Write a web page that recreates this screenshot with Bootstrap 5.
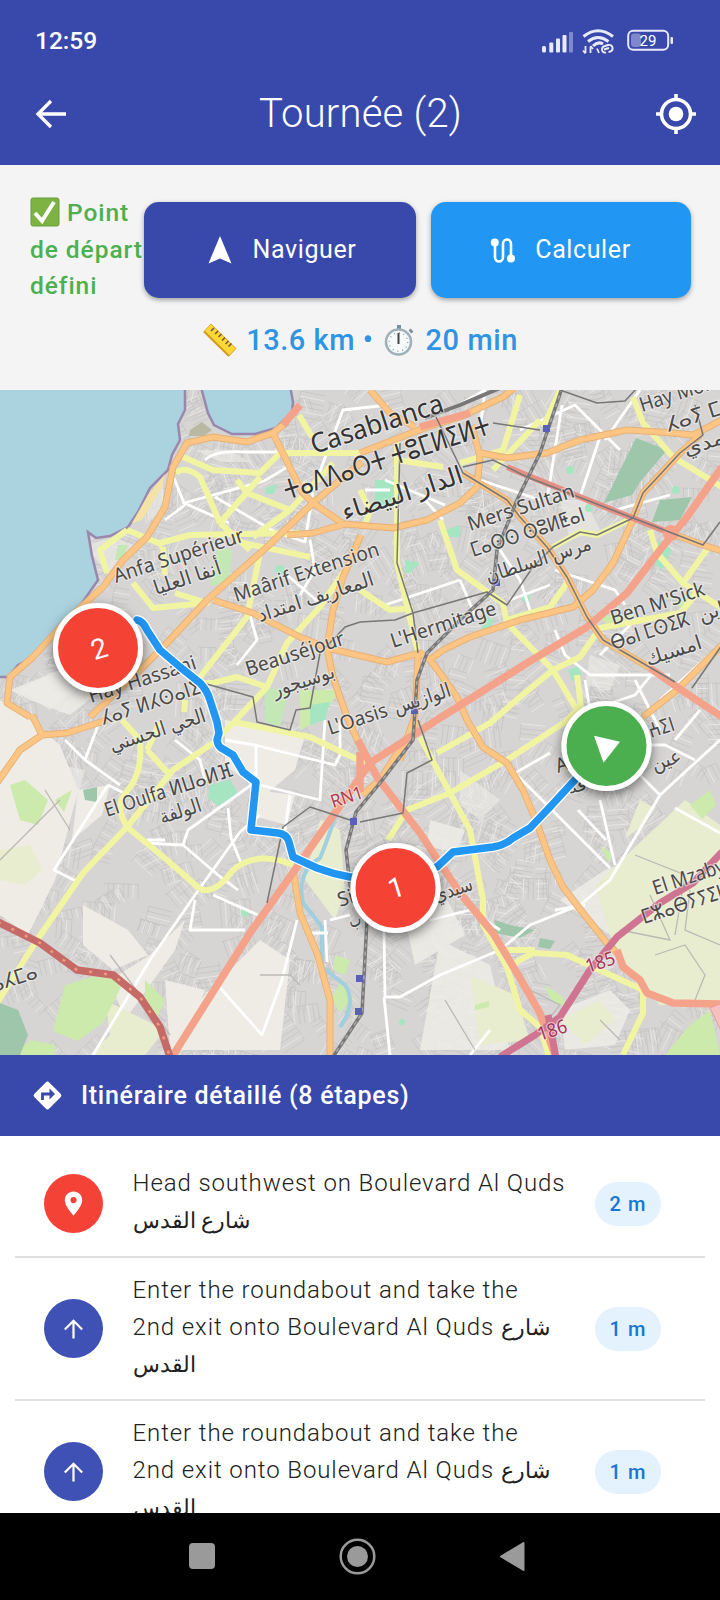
<!DOCTYPE html>
<html lang="fr">
<head>
<meta charset="utf-8">
<meta name="viewport" content="width=device-width, initial-scale=1">
<title>Tournée</title>
<link href="https://cdn.jsdelivr.net/npm/bootstrap@5.3.0/dist/css/bootstrap.min.css" rel="stylesheet">
<style>
body{font-family:Roboto,"Noto Sans","DejaVu Sans",sans-serif;width:720px;height:1600px;overflow:hidden;background:#fff}
svg{display:block;flex:none}
.indigo{background:#3949ab}
.statusbar{height:82px;padding:0 47px 0 35px}
.clock{font-size:24.5px;font-weight:500;letter-spacing:0;line-height:1}
.titlebar{height:83px;padding:0 23px 20px 34px}
.titlebar h1{font-size:40px;font-weight:300;letter-spacing:.2px;line-height:62px;position:relative;left:-1px}
.summary{height:225px;background:#f4f4f4;padding:30px 29px 0 30px}
.start-ok{width:114px;color:#4caf50;font-size:24.5px;font-weight:500;line-height:36.7px;letter-spacing:.95px;white-space:nowrap}
.start-ok svg,.trip svg{display:inline-block}
.btn-app{height:96px;border:0;border-radius:15px;color:#fff;font-size:25px;letter-spacing:.6px;box-shadow:0 2px 5px rgba(0,0,0,.35);padding:0}
.trip{color:#2e94e3;font-size:29px;font-weight:500;line-height:40px;letter-spacing:.55px;margin-top:15px}
.map{height:665px;background:#d6d5d4;overflow:hidden}
.map text{font-family:"Noto Sans","DejaVu Sans",sans-serif;fill:#4a4a4a;font-size:20px;paint-order:stroke;stroke:#f4f2ef;stroke-opacity:.6;stroke-width:2.5px;stroke-linejoin:round}
.map .pin-no{font-family:Roboto,sans-serif;font-size:28px;fill:#fff;stroke:none;text-anchor:middle}
.steps-head{height:81px;padding:0 0 0 32px;font-size:25px;font-weight:500;letter-spacing:.72px}
.steps{height:377px;overflow:hidden;padding:15.500px 15px 0}
.step{height:143px;padding:0 44px 0 29px;border-bottom:2px solid #e0e0e0}
.step:first-child{height:106.500px}
.dot{width:59px;height:59px;flex:none}
.step p{width:440px;margin:-3px 0 0 29.5px;font-size:24px;font-weight:300;line-height:37px;letter-spacing:.9px;color:#212121}
.arab{font-size:21.5px;line-height:1;letter-spacing:0}
.dist{width:66px;height:44px;background:#e3f2fd;color:#1976d2;font-size:20px;font-weight:500;letter-spacing:1px;margin-left:auto}
.navkeys{height:87px;background:#000}
</style>
</head>
<body class="d-flex flex-column">
<div class="indigo statusbar d-flex align-items-center justify-content-between text-white flex-shrink-0">
  <span class="clock">12:59</span>
  <svg width="131" height="28" viewBox="0 0 131 28">
    <g fill="#e8eafc"><rect x="0" y="19" width="4" height="6.500" rx="1.500"/><rect x="7.300" y="15.500" width="4" height="10" rx="1"/><rect x="14" y="11.500" width="4" height="14" rx="1"/><rect x="20.500" y="8" width="4" height="17.500" rx="1"/><rect x="27" y="5" width="4" height="20.500" rx="1" opacity=".4"/></g>
    <g fill="none" stroke="#e8eafc" stroke-width="3"><path d="M41.500 9.500Q56-2 71 9.500M46 14.500Q56 6.500 66.500 14.500M51 19Q56 14 61 17"/><path d="M43.500 19v7m-2.500-2.500 2.500 3M48.500 26v-6.500m2.500 2.500-2.500-3M55 21.500l2 4.500" stroke-width="1.800"/><path d="M64 25.500c-4 1-6-5-1-6.500l3-1c5-1 6 5 2.500 6.500l-2 .5M62 22.500l5-1.500" stroke-width="1.900"/></g>
    <rect x="86.200" y="3.700" width="40" height="19" rx="5" fill="none" stroke="#e8eafc" stroke-width="2"/><rect x="89" y="6.500" width="10" height="13.500" rx="3" fill="#7f88cb"/><rect x="128.500" y="10" width="2.500" height="7" rx="1" fill="#e8eafc"/>
    <text x="106" y="18.500" text-anchor="middle" fill="#fff" font-size="15" font-family="Roboto">29</text>
  </svg>
</div>
<header class="indigo titlebar d-flex align-items-center justify-content-between text-white flex-shrink-0">
  <svg width="34" height="30" viewBox="0 0 34 30" fill="none" stroke="#fff" stroke-width="3.300"><path d="M32 15H5M17 2 4 15l13 13"/></svg>
  <h1 class="m-0">Tournée (2)</h1>
  <svg width="42" height="42" viewBox="0 0 42 42"><circle cx="21" cy="21" r="14.500" fill="none" stroke="#fff" stroke-width="3.600"/><circle cx="21" cy="21" r="7.300" fill="#fff"/><path d="M21 1v6M21 35v6M1 21h6M35 21h6" stroke="#fff" stroke-width="3.600"/></svg>
</header>
<section class="summary flex-shrink-0">
  <div class="d-flex align-items-center">
    <div class="start-ok flex-shrink-0"><svg width="30" height="30" viewBox="0 0 30 30" style="vertical-align:-6px"><rect x="1" y="1" width="28" height="28" rx="2" fill="#7cb342" stroke="#689f38"/><path d="m5 16 7 8L24 5" fill="none" stroke="#fff" stroke-width="4"/></svg> Point<br>de départ<br>défini</div>
    <button class="btn btn-app indigo d-flex align-items-center justify-content-center" style="width:272px"><svg width="24" height="30" viewBox="0 0 24 30" fill="#fff" class="ms-1"><path d="M12 1 23.500 28.500 12 23.500.500 28.500z"/></svg><span style="margin-left:21px">Naviguer</span></button>
    <button class="btn btn-app d-flex align-items-center justify-content-center" style="width:260px;margin-left:14.500px;background:#2196f3"><svg width="26" height="27" viewBox="0 0 26 27"><path d="M5 5v15c0 6 8 6 8 0V7c0-6 8-6 8 0v14" fill="none" stroke="#fff" stroke-width="2.600"/><circle cx="4.800" cy="5.500" r="4" fill="#fff"/><circle cx="21" cy="21.500" r="4" fill="#fff"/></svg><span style="margin-left:19px">Calculer</span></button>
  </div>
  <div class="trip d-flex align-items-center justify-content-center">
    <svg width="34" height="34" viewBox="0 0 34 34"><path d="M8 1 33 25.500 26 33 1 8.500z" fill="#fdd835" stroke="#e0a91f"/><path d="m1 8.500 25 24.500" stroke="#d29a20" stroke-width="2"/><path d="m11 5-3 3m7 0-3 3m6.500 0-3 3m6.500.500-3 3m6.500.500-3 3m6-.500-3 3" stroke="#795548" stroke-width="1.600"/></svg>
    <span style="margin:0 10px 0 9px">13.6 km •</span>
    <svg width="30" height="34" viewBox="0 0 30 34"><path d="M15 6V2M26 9l2-2" stroke="#78909c" stroke-width="4"/><circle cx="14.500" cy="19" r="12.500" fill="#f7fafb" stroke="#9fb0b8" stroke-width="2.600"/><circle cx="14.500" cy="19" r="9.200" fill="none" stroke="#90a4ae" stroke-width="1.500" stroke-dasharray="1 3.820"/><path d="M14.500 21V10" stroke="#444" stroke-width="2"/></svg>
    <span style="margin-left:12px">20 min</span>
  </div>
</section>
<section class="map flex-shrink-0">
<svg width="720" height="665" viewBox="0 390 720 665">
  <defs><filter id="shade" x="-40%" y="-40%" width="180%" height="180%"><feDropShadow dx="0" dy="4" stdDeviation="6" flood-opacity=".5"/></filter></defs>
  <path id="blocks" fill="none" stroke="#c3c1c1" stroke-width=".7"/>
  <path id="lanes" fill="none" stroke="#e9e7e6" stroke-width="1"/>
  <!-- open land -->
  <g fill="#efece6">
    <path d="M0 700 30 720 60 745 78 790 55 880 28 935 0 915zM78 790l32-5-8 30-30 25zM83 905l45 25 20 25-35 15-30-25zM150 955l35-35-10 30-50 70-15-40zM165 980l40 10-25 60h-10zM200 1000l60-60 30 20-10 90h-100zM225 720l80 15-10 35-30 25-40-30zM255 790l40 5-8 30-30-8z"/>
    <path d="M430 820l35 10-8 22-30-5zM440 940l50 25 20 85H420zM560 1010l50-20 20 20-15 35-50 5zM560 900l45-30 30-10-10 60-15 15zM10 690l50-20 35 25-25 20-40-15zM390 850l30-5 30 60 15 30-50 30z" opacity=".85"/>
    <path d="M85 545l30-8 20 10-25 30zM145 500l18-15 0 25-15 12zM195 450l35 0 20 12-30 0zM560 500l25 0 15 30-30 10zM20 690l30-15 25 15-25 20zM40 760l45 10-10 35-30 0zM590 655l30 10-10 25-25-5zM460 770l40 30-20 20-20-15z" opacity=".6"/>
  </g>
  <g fill="#e9edcf">
    <path d="M0 850 30 845 42 870 25 885 0 880zM105 1000l60 30-20 25H90l20-20zM595 885l90-85 35 25v180h-60l-45-55zM640 800l15 8-12 18-18 12zM305 880l15-60 20 10 5 60-10 30zM470 975l45 20 15 45-50 5zM560 1020l40-20 15 20-30 25z"/>
  </g>
  <g fill="#cbeaac"><path d="M10 785 25 780 48 800 38 825 20 820zM55 800l17-10-8 22zM65 985l40-12 18 10-20 40-25 18-25-10zM145 980l20 20-8 18-12-15zM30 1040l25 5v10H15zM335 955l15 5-5 15-12-5zM690 1025l20-15 10 45h-55zM331 998l12-20 10 20-13 15zM690 805l20-15 6 15-14 14zM545 985l18 12 2 10-15-8zM475 1005l14-4v6l-14 3zM600 846l14 8-6 8zM340 690l-40 0 0 40 20-10zM595 615l40 0-20 15zM670 605l25-15-5 18z"/><path d="M218 548l15 2-5 35-18 0zM265 690l25-3-10 40-15-5zM118 545l10 0-5 15-8 0z" fill="#c4e8b5"/></g>
  <g fill="#a6e5c2"><path d="M210 785l20-6 8 15-20 12-10-8zM375 480l22 0-3 25-20 5zM310 705l20-3-5 18-15 5zM405 560l15 3-10 10-5 0zM484 615l10 5-5 12-8-2zM650 560l10-20 12 10-10 20zM568 670l10-4 4 10-10 5zM445 530l15-5 0 12-10 0zM265 488l12-4-3 10-8 0z"/><circle cx="245" cy="913" r="4"/><circle cx="402" cy="1022" r="3"/><circle cx="526" cy="598" r="4"/><circle cx="589" cy="508" r="4"/><circle cx="676" cy="490" r="4"/><circle cx="570" cy="470" r="4"/><circle cx="280" cy="570" r="5"/></g>
  <g fill="#9dc6aa"><path d="M636 438 667 450 640 482 632 495 604 503 620 470zM660 500 692 497 680 520 652 522zM0 1003 18 1010 28 1035 20 1055H0zM495 920l15 5 25 5-15 8-25-5zM540 938l15 3-5 8-12-2zM83 790l14-3 0 15-12-2z"/></g>
  <!-- sea -->
  <g fill="#aad3df" stroke="#9a87ae" stroke-width="2.500">
    <path d="M185 380 185 410 178 424 180 440 172 455 168 470 150 488 138 512 128 527 110 536 96 538 88 532 92 556 98 580 82 603 57 632 35 657 18 665 8 677-5 677V380z"/>
    <path d="M199 380 208 413 214 425 232 434 255 434 276 428 292 412 293 402 289 380z"/>
  </g>
  <path d="M165 474 148 495 132 523 142 520 162 487z" fill="#f5e2a6"/><path d="m190 430 12-8 10 8-8 6h-15z" fill="#b9b8a3"/>
  <path d="M343 790Q330 835 320 858Q296 872 303 903L322 927V967L345 985Q357 1003 340 1027" fill="none" stroke="#a0d0df" stroke-width="4"/>
  <!-- minor roads -->
  <g fill="none" stroke="#fff" stroke-width="2.800" stroke-linejoin="round">
    <path d="M93 1055 150 960 195 895 240 832 260 815M108 785 54 870 76 881M108 785l30 15M65 740l20 20 35 25M85 760l15-40M165 840h-18M143 843l40 2 35 30 20 15M183 845l5-15 45-32 25-18M228 808l3 30 10 25M175 740l25 20 5 20M195 900l-5 30h55M213 895l45 20M297 920l-15 60-20 55-40-45-3-4M225 740l30 5 80 20 5-10V720M256 745v35M260 785l60 15 5-80M290 795l-5 35M325 920l2 42M308 933h20M330 920l20-5M174 478l10 25 45 20M184 503l80-22 25-15M205 460q10-10 40-8h60M215 497l60 35 30 10 8-50M165 520l20-15M313 490l30-80 45-5M250 615l7 25-20 25M287 575l35 30M310 540l5 30-15 25"/>
    <path d="M385 605 460 580M460 580 475 615M500 550 520 580 530 610M510 600l40-15M555 570l60 20 10 15M555 630l10 25 25 20 80 0M520 430 575 405 620 450M600 437 580 497M640 390l-35 50M562 405l-15 95M385 480l60 25M443 520 425 500M480 480l60 20M615 510l55-15M585 680l5 30 45-15 20-25M635 680l25 50M660 700l60-55M600 655l30-30M365 490H390M450 410l35-20-5 40M600 800l15 65M515 773l95 95M515 773l35-20M578 810l28 30M720 740 660 795 610 880 580 905 530 925 500 950 440 975 400 997 385 997 384 930M384 997 390 1055M430 920l40-10 30 20M675 808l45 25M660 795l-20-20M610 745l55 0 30 15M675 740l25-30M470 1055l20-25M585 905l-30 5"/>
  </g>
  <g fill="none" stroke="#bbb9b4" stroke-width="1.300"><path d="M0 860 60 800M620 930l50 10-20-45M690 890l-5 40 35 15M655 955l30-10 20 30-10 25M635 855l50 20-10 60M530 990l30 15-20 25M445 1000l30 50M600 1020l20 20M70 830l-25-40M110 955l60 80M260 975l30 0 10 10"/></g>
  <!-- yellow roads -->
  <g fill="none" stroke="#f1f5a2" stroke-width="6" stroke-linejoin="round">
    <path d="M-3 1003 37 940 83 873 127 827 167 860 200 889Q215 895 233 870Q257 850 293 865M127 827Q113 805 128 790Q143 772 140 740L122 720M127 827 173 770 213 743 234 722 267 687 287 643 320 607 345 570M234 722 310 737 365 763M147 750 168 773M147 750 160 722M185 700 184 712"/>
    <path d="M200 683 213 683 237 677 267 687M200 677 247 617 260 553M220 523 200 477Q185 465 176 473M183 457 213 470 260 473 280 453 360 453M220 523 260 477M237 480 247 493 290 510 253 537M290 510 333 463M160 543 190 535 300 533M127 530 100 550 107 573M127 530 163 545M243 543 310 557M133 583 153 608 207 603 175 593M220 523 250 550M163 547 165 575M299 415 312 437"/>
    <path d="M397 440 397 563 418 653M360 590 390 610 413 608M440 520 457 570 503 603 507 623 553 670 580 657 600 628 680 613 700 590M553 670 520 697 490 723 437 753M553 670 577 710 565 722 507 760 450 793 407 810 388 840M577 675 582 715M397 460 443 467M460 463 503 450 520 395M540 420 493 470M560 390 543 427M633 397 643 423 673 457 722 487M650 530 657 553 683 583 710 545M683 583 722 608M507 620 550 607 567 583M553 547 580 532 597 535 633 518M360 490 370 510 365 525"/>
    <path d="M420 737 450 793 470 830 483 900 483 925 507 967 520 1010 540 1027 550 1060M507 967 533 953 567 955 643 990 643 1013 623 1055M505 950H535"/>
  </g>
  <!-- orange roads -->
  <g fill="none" stroke-linejoin="round">
    <path id="casing" stroke="#e6b078" stroke-width="7"/>
    <path id="fill" stroke="#fcc584" stroke-width="5.200"/>
  </g>
  <!-- trunk roads and motorways -->
  <g fill="none" stroke-linejoin="round">
    <path d="M722 467 687 517 660 550 627 593 587 627 527 663 440 718 370 763 337 810 297 867 250 933 172 1057M358 740 377 777 420 833 460 893 493 933 517 973 540 1013 556 1058M617 950 623 967 640 980 647 993 673 1003 722 1004M650 668 677 687 722 717M300 405 283 425M420 427 470 413M360 752v40" stroke="#f5a28b" stroke-width="7.500"/>
    <path d="M507 467 580 497 670 533" stroke="#e58f83" stroke-width="6"/><circle cx="671" cy="533" r="8" fill="#f5a28b"/>
    <path d="M-2 922 40 943 77 970 113 975 140 997 160 1027 170 1057" stroke="#c66a67" stroke-width="7.500"/><path d="M-2 922 40 943 77 970 113 975 140 997 160 1027 170 1057" stroke="#ef9a7d" stroke-width="2.500" stroke-dasharray="3 12"/>
    <path d="M500 1057 535 1035 560 1017 590 970 617 937 660 903 693 883 722 852M548 1015 556 1058" stroke="#cf7592" stroke-width="7"/>
    <path d="m710 1008 12-5v30z" fill="#f5c0bd" stroke="#e79ca0"/>
  </g>
  <!-- rail and tram -->
  <g fill="none" stroke="#777" stroke-linejoin="round">
    <path d="M562 388 540 453 517 500 497 550 493 590 460 620 427 653 417 680 415 710 413 740 380 783 356 812 346 850 350 885 367 920 362 1013 333 1057" stroke-width="3.500"/><path d="M562 388 540 453 517 500 497 550 493 590 460 620 427 653 417 680 415 710 413 740 380 783 356 812 346 850 350 885 367 920 362 1013 333 1057" stroke="#aaa" stroke-width="1.500" stroke-dasharray="4 4"/>
    <path d="M425 418 460 405 500 388" stroke-width="4"/>
    <path d="M360 622 395 620 413 613 487 592 507 605 533 567 553 547 580 532 597 535 633 518M400 443 397 563 413 613 418 653M560 390 597 403 625 401 637 388M493 423 540 430M436 417 463 473 507 500 520 517 547 547 567 577 587 617 603 640 675 682M463 467 493 460 527 477 633 518 703 545 720 522M633 518 643 493 680 453 703 435 695 405M692 688 722 645M203 683 253 697 257 722 290 730 296 710 310 708 320 653 345 627 360 622M267 903 283 827 310 807 350 820M418 720 432 760 407 773 403 813 360 822" stroke-width="1.500"/>
  </g>
  <g fill="#5960b5"><path d="M543 425h7v7h-7zM493 579h7v7h-7zM411 707h7v7h-7zM350 818h7v7h-7zM356 975h7v7h-7zM355 1008h7v7h-7z"/></g>
  <g id="labels"></g>
  <!-- driving route -->
  <g fill="none" stroke-linejoin="round" stroke-linecap="round">
    <path id="halo" stroke="#fff" stroke-width="10"/>
    <path id="line" stroke="#2196f3" stroke-width="7.500"/>
  </g>
  <g stroke="#fff" stroke-width="5"><circle cx="98" cy="648" r="42.500" fill="#f44336" filter="url(#shade)"/><circle cx="395.500" cy="888" r="42.500" fill="#f44336" filter="url(#shade)"/><circle cx="606.500" cy="746" r="42.500" fill="#4caf50" filter="url(#shade)"/></g>
  <text class="pin-no" transform="translate(102 658) rotate(-17)">2</text>
  <text class="pin-no" transform="translate(399 897) rotate(-17)">1</text>
  <path d="M594 735.700 620 741.700 603.500 762.700z" fill="#fff"/>
</svg>
</section>
<div class="indigo steps-head d-flex align-items-center text-white flex-shrink-0">
  <svg width="31" height="31" viewBox="0 0 31 31"><rect x="5" y="5" width="21" height="21" rx="2.500" transform="rotate(45 15.500 15.500)" fill="#fff"/><path d="M10.500 20v-6h8" fill="none" stroke="#3949ab" stroke-width="2.800"/><path d="m17.500 8.500 5.500 5.500-5.500 5.500z" fill="#3949ab"/></svg>
  <span style="margin-left:18px">Itinéraire détaillé (8 étapes)</span>
</div>
<main class="steps flex-shrink-0">
  <div class="step d-flex align-items-center">
    <svg class="dot" viewBox="0 0 59 59"><circle cx="29.500" cy="29.500" r="29.500" fill="#f44336"/><path fill-rule="evenodd" d="M29.500 17.500c-5 0-8.700 3.800-8.700 8.700 0 6.300 8.700 15.300 8.700 15.300s8.700-9 8.700-15.300c0-4.900-3.700-8.700-8.700-8.700zm0 11.700a3.100 3.100 0 1 1 0-6.200 3.100 3.100 0 0 1 0 6.200z" fill="#fff"/></svg>
    <p>Head southwest on Boulevard Al Quds<br><span class="arab">شارع القدس</span></p><span class="dist rounded-pill d-flex align-items-center justify-content-center">2 m</span>
  </div>
  <div class="step d-flex align-items-center">
    <svg class="dot" viewBox="0 0 59 59"><circle cx="29.500" cy="29.500" r="29.500" fill="#3f51b5"/><path d="M29.500 39.500V22M20.800 30.500l8.700-8.700 8.700 8.700" fill="none" stroke="#fff" stroke-width="2.200"/></svg>
    <p>Enter the roundabout and take the<br>2nd exit onto Boulevard Al Quds <span class="arab">شارع</span><br><span class="arab">القدس</span></p><span class="dist rounded-pill d-flex align-items-center justify-content-center">1 m</span>
  </div>
  <div class="step d-flex align-items-center">
    <svg class="dot" viewBox="0 0 59 59"><circle cx="29.500" cy="29.500" r="29.500" fill="#3f51b5"/><path d="M29.500 39.500V22M20.800 30.500l8.700-8.700 8.700 8.700" fill="none" stroke="#fff" stroke-width="2.200"/></svg>
    <p>Enter the roundabout and take the<br>2nd exit onto Boulevard Al Quds <span class="arab">شارع</span><br><span class="arab">القدس</span></p><span class="dist rounded-pill d-flex align-items-center justify-content-center">1 m</span>
  </div>
</main>
<footer class="navkeys flex-shrink-0">
  <svg width="720" height="87" viewBox="0 1 720 87"><rect x="189" y="31" width="26" height="26" rx="4" fill="#9a9a9a"/><circle cx="357.500" cy="44.500" r="16.800" fill="none" stroke="#9a9a9a" stroke-width="2.500"/><circle cx="357.500" cy="44.500" r="10.500" fill="#9a9a9a"/><path d="M523.500 31v27L501 44.500z" fill="#9a9a9a" stroke="#9a9a9a" stroke-width="2" stroke-linejoin="round"/></svg>
</footer>
<script src="https://cdn.jsdelivr.net/npm/bootstrap@5.3.0/dist/js/bootstrap.bundle.min.js"></script>
<script>
const put = (id, d) => document.getElementById(id).setAttribute("d", d);
const orange = "M287 422 273 433 247 442 213 437 187 443 173 467 165 507 147 537 123 560 103 587 67 620 33 657 10 677 7 703 30 717M107 720 67 733 42 735 20 750-3 783M42 735 32 715M362 462 313 503 267 547 233 577 207 600 167 643 143 667 90 717M313 503 345 525M273 433 302 492 315 505M360 453 427 427 460 417 503 397 515 387M287 535 313 533 345 524 393 528 427 520 460 503 477 487 480 457 472 425M480 453 507 458 547 453 580 440 627 430 660 432 693 435 722 420M370 390 390 413 415 427M633 520 613 563 593 590 573 607 520 620 470 637 443 650 430 660 420 653 387 662 327 648 300 637 253 613 213 600M327 648 333 610 343 577 361 535M327 648 333 677 347 717 362 750M430 660 440 673 457 697 467 720 483 747 507 763 523 790 537 823 550 860 563 887 583 913 607 943 617 953M463 473 507 500 520 517 547 547 567 577 587 617 603 640 650 668M633 518 643 493 680 453 700 435M643 717 677 690 722 645M670 533 703 545 722 551M293 870 300 913 317 953 330 1000 330 1057M418 655 415 715 400 760M418 720 380 780 362 795";
put("casing", orange); put("fill", orange);
const route = "M137 620Q143 621 147 630L160 650 180 667 200 683Q207 690 210 700L217 722 219 733 217 740Q218 747 223 749L233 755 243 772 256 782 251 830 278 833Q287 834 289 842L293 857 317 868Q333 874 350 877H395L437 867 453 852 493 847Q505 845 513 838L530 828 550 807 573 782 606 746";
put("halo", route); put("line", route);
// Place names: text, start x, baseline y, length along the baseline, size, colour
const names = [
 ["Casablanca",314,454,138,27,"#333"],["ⵜⴰⴷⴷⴰⵔⵜ ⵜⵓⵎⵍⵉⵍⵜ",287,500,216,27,"#333"],["الدار البيضاء",345,521,126,25,"#333"],
 ["Anfa Supérieur",116,583,136],["أنفا العليا",156,595,70],["Maârif Extension",236,602,152],["المعاريف امتداد",260,622,121],
 ["Beauséjour",248,676,103],["بوسيجور",275,697,64],["Mers Sultan",470,531,111],["ⵎⴰⵙⵙ ⵙⵓⵍⵟⴰⵏ",473,557,119],
 ["مرس السلطان",488,583,110],["L'Hermitage",393,648,110],["Ben M'Sick",613,625,98],["ⴱⴰⵏ ⵎⵙⵉⴽ",613,650,82],["ابن",701,622,26],
 ["امسيك",648,666,58],["Hay Mohammadi",642,412,150],["ⵃⴰⵢ ⵎⵓⵃⵎⵎⴰⴷⵉ",668,432,150],["مدي",686,456,42],
 ["L'Oasis",330,735,62],["الوازيس",396,714,59],["Hay Hassani",91,703,112],["ⵃⴰⵢ ⵍⵃⵙⴰⵏⵉ",103,725,104],["الحي الحسني",112,752,100],
 ["El Oulfa ⵍⵡⴰⵍⴼ",107,817,134],["الولفة",162,824,43],["El Mzaby",655,895,75],["ⵎⵣⴰⴱⵢⵢⵉⵏ",644,924,84],["ⴰⵃⵎⴰ",-6,992,47],
 ["Si",340,907,16],["ب",351,928,12],["سيدي",436,902,40],["A",558,773,12],["ⵄⵉⵏ",651,738,26],["عين",654,771,30],["قة",569,795,20],
 ["RN1",333,808,33,18,"#b53a4a"],["185",588,973,30,19,"#a53654"],["186",540,1041,30,19,"#a53654"]];
const ns = "http://www.w3.org/2000/svg", box = document.getElementById("labels");
names.forEach(([t,x,y,w,s=20,c="#4a4a4a"]) => {
  const e = document.createElementNS(ns,"text");
  e.setAttribute("transform",`translate(${x} ${y}) rotate(-18)`);
  e.setAttribute("textLength",w); e.setAttribute("lengthAdjust","spacingAndGlyphs");
  e.style.fontSize = s+"px"; e.style.fill = c; e.textContent = t; box.append(e);
});
// Fine street mesh: small blocks, each with its own orientation
let seed = 7; const rnd = () => (seed = (seed*16807)%2147483647)/2147483647;
let a = "", b = "";
for (let i = 0; i < 1000; i++) {
  const x = rnd()*730, y = 385+rnd()*680, r = rnd()*3.14, n = 3+rnd()*4, l = 10+rnd()*16, c = Math.cos(r), s = Math.sin(r);
  for (let k = 0; k < n; k++) {
    const d = k*5, p = `M${(x-s*d).toFixed(1)} ${(y+c*d).toFixed(1)}l${(c*l).toFixed(1)} ${(s*l).toFixed(1)}`;
    if ((i+k)%3) a += p; else b += p;
  }
  a += `M${x.toFixed(1)} ${y.toFixed(1)}l${(-s*n*5).toFixed(1)} ${(c*n*5).toFixed(1)}`;
}
put("blocks", a); put("lanes", b);
</script>
</body>
</html>
